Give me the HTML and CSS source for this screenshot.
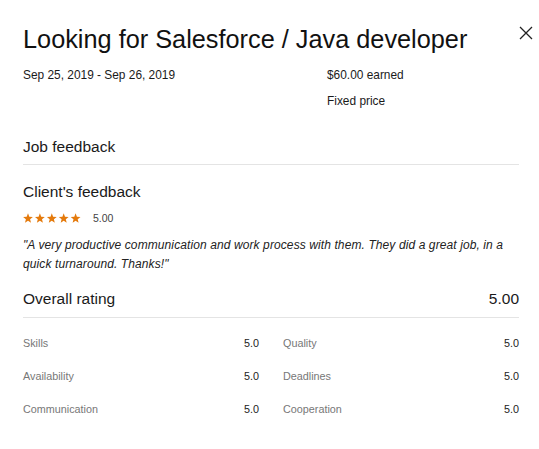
FILE: index.html
```html
<!DOCTYPE html>
<html>
<head>
<meta charset="utf-8">
<link rel="stylesheet" href="styles.css">
</head>
<body>
<div class="modal">
  <button class="close" aria-label="Close">
    <svg width="14" height="14" viewBox="0 0 14 14"><path d="M1 1L13 13M13 1L1 13" stroke="#222" stroke-width="1.3" fill="none"/></svg>
  </button>
  <h1 class="title">Looking for Salesforce / Java developer</h1>
  <div class="meta">
    <div class="dates">Sep 25, 2019 - Sep 26, 2019</div>
    <div class="pay">
      <div>$60.00 earned</div>
      <div class="type">Fixed price</div>
    </div>
  </div>
  <h2 class="section">Job feedback</h2>
  <h3 class="sub">Client's feedback</h3>
  <div class="rating">
    <span class="stars">
      <svg width="58" height="11" viewBox="0 0 58 11">
        <g fill="#e47a0c">
          <path id="s" d="M5 0.3L6.3 3.7L9.9 3.9L7.1 6.2L8 9.8L5 7.8L2 9.8L2.9 6.2L0.1 3.9L3.7 3.7Z"/>
          <use href="#s" x="11.9"/>
          <use href="#s" x="23.8"/>
          <use href="#s" x="35.7"/>
          <use href="#s" x="47.6"/>
        </g>
      </svg>
    </span>
    <span class="score">5.00</span>
  </div>
  <p class="quote">"A very productive communication and work process with them. They did a great job, in a quick turnaround. Thanks!"</p>
  <div class="overall">
    <span>Overall rating</span>
    <span>5.00</span>
  </div>
  <div class="grid">
    <div class="row"><span class="label">Skills</span><span class="val">5.0</span></div>
    <div class="row"><span class="label">Quality</span><span class="val">5.0</span></div>
    <div class="row"><span class="label">Availability</span><span class="val">5.0</span></div>
    <div class="row"><span class="label">Deadlines</span><span class="val">5.0</span></div>
    <div class="row"><span class="label">Communication</span><span class="val">5.0</span></div>
    <div class="row"><span class="label">Cooperation</span><span class="val">5.0</span></div>
  </div>
</div>
</body>
</html>
```
FILE: styles.css
```css
html, body {
  margin: 0;
  padding: 0;
  background: #fff;
}
body {
  font-family: "Liberation Sans", Arial, sans-serif;
  color: #1a1a1a;
}
.modal {
  position: relative;
  width: 496px;
  padding: 25px 20px 0 23px;
}
.close {
  position: absolute;
  top: 26px;
  right: 6px;
  border: 0;
  background: none;
  padding: 0;
  width: 14px;
  height: 14px;
  cursor: pointer;
}
.close svg { display: block; }
.title {
  margin: 0;
  font-size: 25.3px;
  font-weight: 400;
  line-height: 28px;
  color: #111;
}
.meta {
  display: flex;
  margin-top: 15px;
  font-size: 11.9px;
  line-height: 14px;
}
.dates { width: 304px; }
.type { margin-top: 12px; }
.section {
  margin: 29px 0 0;
  font-size: 15.5px;
  font-weight: 400;
  line-height: 20px;
  padding-bottom: 7px;
  border-bottom: 1px solid #e4e4e4;
}
.sub {
  margin: 17px 0 0;
  font-size: 15.5px;
  font-weight: 400;
  line-height: 20px;
}
.rating {
  display: flex;
  align-items: center;
  gap: 12px;
  margin-top: 9px;
  height: 14px;
}
.stars svg { display: block; }
.score {
  font-size: 10.5px;
  color: #444;
}
.quote {
  margin: 11px 0 0;
  font-style: italic;
  font-size: 12px;
  letter-spacing: 0.1px;
  line-height: 19px;
  color: #222;
}
.overall {
  display: flex;
  justify-content: space-between;
  margin-top: 15px;
  font-size: 15.5px;
  line-height: 20px;
  padding-bottom: 8px;
  border-bottom: 1px solid #e4e4e4;
}
.grid {
  display: grid;
  grid-template-columns: 1fr 1fr;
  column-gap: 24px;
  row-gap: 19px;
  margin-top: 18px;
}
.row {
  display: flex;
  justify-content: space-between;
  font-size: 10.8px;
  line-height: 14px;
}
.label { color: #777; }
.val { color: #222; }
```
